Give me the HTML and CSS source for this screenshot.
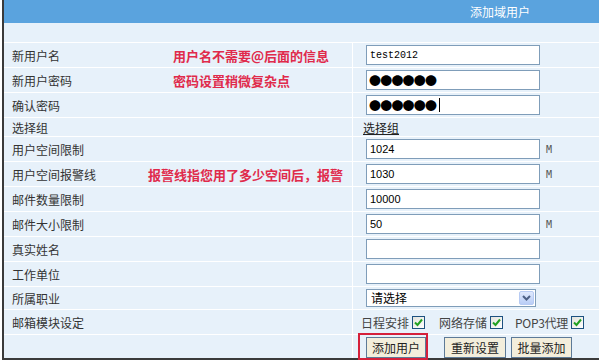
FILE: index.html
```html
<!DOCTYPE html>
<html>
<head>
    <meta charset="utf-8">
    <title>添加域用户</title>
    <link rel="stylesheet" href="styles.css">
</head>
<body>
    <div class="panel">
        <div class="title">添加域用户</div>

        <div class="form">
            <div class="cell blank"></div>

            <div class="cell label"><span class="name">新用户名</span><span class="note">用户名不需要@后面的信息</span></div>
            <div class="cell field"><input type="text" class="text mono" value="test2012"></div>

            <div class="cell label"><span class="name">新用户密码</span><span class="note">密码设置稍微复杂点</span></div>
            <div class="cell field"><input type="text" class="text pw" value="●●●●●●"></div>

            <div class="cell label"><span class="name">确认密码</span></div>
            <div class="cell field">
                <span class="pw-wrap"><input type="text" class="text pw" value="●●●●●●"><span class="caret"></span></span>
            </div>

            <div class="cell label"><span class="name">选择组</span></div>
            <div class="cell field link-cell"><a href="#" class="link">选择组</a></div>

            <div class="cell label"><span class="name">用户空间限制</span></div>
            <div class="cell field"><input type="text" class="text" value="1024"><span class="unit">M</span></div>

            <div class="cell label"><span class="name short-name">用户空间报警线</span><span class="note">报警线指您用了多少空间后，报警</span></div>
            <div class="cell field"><input type="text" class="text" value="1030"><span class="unit">M</span></div>

            <div class="cell label"><span class="name">邮件数量限制</span></div>
            <div class="cell field"><input type="text" class="text" value="10000"></div>

            <div class="cell label"><span class="name">邮件大小限制</span></div>
            <div class="cell field"><input type="text" class="text" value="50"><span class="unit">M</span></div>

            <div class="cell label"><span class="name">真实姓名</span></div>
            <div class="cell field"><input type="text" class="text"></div>

            <div class="cell label"><span class="name">工作单位</span></div>
            <div class="cell field"><input type="text" class="text"></div>

            <div class="cell label"><span class="name">所属职业</span></div>
            <div class="cell field">
                <div class="select-wrap">
                    <select class="select">
                        <option>请选择</option>
                    </select>
                    <span class="arrow">
                        <svg width="9" height="6" viewBox="0 0 9 6"><path d="M1 1 L4.5 4.5 L8 1" fill="none" stroke="#4d6185" stroke-width="2"/></svg>
                    </span>
                </div>
            </div>

            <div class="cell label"><span class="name">邮箱模块设定</span></div>
            <div class="cell field modules">
                <span class="module">日程安排</span>
                <span class="check"><svg width="13" height="13" viewBox="0 0 13 13"><path d="M3 6.5 L5.5 9 L10 3.5" fill="none" stroke="#21a121" stroke-width="2"/></svg></span>
                <span class="module gap">网络存储</span>
                <span class="check"><svg width="13" height="13" viewBox="0 0 13 13"><path d="M3 6.5 L5.5 9 L10 3.5" fill="none" stroke="#21a121" stroke-width="2"/></svg></span>
                <span class="module gap pop">POP3代理</span>
                <span class="check"><svg width="13" height="13" viewBox="0 0 13 13"><path d="M3 6.5 L5.5 9 L10 3.5" fill="none" stroke="#21a121" stroke-width="2"/></svg></span>
            </div>

            <div class="cell label"></div>
            <div class="cell field buttons">
                <button class="btn">添加用户</button>
                <button class="btn btn-reset">重新设置</button>
                <button class="btn btn-batch">批量添加</button>
            </div>
        </div>

        <div class="mark"></div>
    </div>
</body>
</html>
```

FILE: styles.css
```css
:root {
    --head-color: #5aa3de;
    --row-color: #e7f1fa;
    --line-color: #7f9db9;
    --note-color: #e02a4b;
}

body {
    margin: 0;
    background: #fff;
    font-family: "Noto Sans CJK SC", sans-serif;
    font-size: 12px;
    color: #333;
    overflow: hidden;
}

.panel {
    position: relative;
    width: 620px;
    margin-left: 2px;
    border-left: 2px solid #3a3a3a;
    border-bottom: 2px solid #3a3a3a;
}

.title {
    height: 23px;
    line-height: 23px;
    padding-left: 466px;
    background: var(--head-color);
    color: #fff;
}

.form {
    display: grid;
    grid-template-columns: 348px 1fr;
    grid-template-rows: 19px 24px 24px 24px 18px repeat(6, 24px) 22px 24px 23px;
    gap: 1px;
    background: #fff;
}

.cell {
    display: flex;
    align-items: center;
    background: var(--row-color);
}

.blank {
    grid-column: 1 / 3;
}

.label {
    padding-left: 8px;
}

.name {
    width: 161px;
    flex-shrink: 0;
}

.name.short-name {
    width: 136px;
}

.note {
    color: var(--note-color);
    font-size: 13px;
    font-weight: bold;
}

.field {
    padding-left: 13px;
}

.text {
    box-sizing: border-box;
    width: 174px;
    height: 20px;
    margin: 0;
    padding: 0 3px;
    border: 1px solid var(--line-color);
    background: #fff;
    font-family: "Liberation Sans", sans-serif;
    font-size: 11px;
    color: #000;
    outline: none;
}

.text.mono {
    font-family: "Liberation Mono", monospace;
    font-size: 10px;
}

.text.pw {
    font-family: "Noto Sans CJK SC", sans-serif;
    font-size: 12px;
    letter-spacing: -0.8px;
    padding-left: 2px;
}

.pw-wrap {
    position: relative;
    display: inline-block;
    height: 20px;
}

.caret {
    position: absolute;
    left: 73px;
    top: 3px;
    width: 1px;
    height: 14px;
    background: #000;
}

.unit {
    margin-left: 6px;
    font-family: "DejaVu Sans Mono", monospace;
    font-size: 10px;
    color: #555;
}

.link-cell {
    padding-left: 10px;
}

.link {
    color: #222;
    text-decoration: underline;
}

.select-wrap {
    position: relative;
    display: inline-block;
}

.select {
    appearance: none;
    -webkit-appearance: none;
    box-sizing: border-box;
    width: 170px;
    height: 18px;
    margin: 0;
    padding: 0 4px;
    border: 1px solid var(--line-color);
    border-radius: 0;
    background: #fff;
    font-family: "Noto Sans CJK SC", sans-serif;
    font-size: 12px;
    line-height: 16px;
    color: #000;
}

.arrow {
    position: absolute;
    top: 2px;
    right: 2px;
    width: 15px;
    height: 14px;
    display: flex;
    align-items: center;
    justify-content: center;
    box-sizing: border-box;
    border: 1px solid #b7cbf3;
    border-radius: 2px;
    background: linear-gradient(#dfe9fd, #b9cdf6);
}

.modules {
    padding-left: 8px;
}

.module {
    color: #444;
}

.module.gap {
    margin-left: 14px;
}

.module.pop {
    margin-left: 12px;
    letter-spacing: -0.3px;
}

.check {
    display: inline-flex;
    box-sizing: border-box;
    width: 13px;
    height: 13px;
    margin-left: 3px;
    border: 1px solid #1c5180;
    background: linear-gradient(135deg, #e3e3dc, #fff);
}

.check svg {
    margin: -1px;
}

.buttons {
    align-items: flex-start;
    padding-top: 2px;
}

.btn {
    box-sizing: border-box;
    height: 21px;
    width: 60px;
    padding: 0;
    border: 1px solid #5d7a97;
    background: #f3eedc;
    font-family: "Noto Sans CJK SC", sans-serif;
    font-size: 12px;
    color: #222;
}

.btn-reset {
    width: 62px;
    margin-left: 18px;
}

.btn-batch {
    width: 61px;
    margin-left: 5px;
}

.mark {
    position: absolute;
    left: 354px;
    top: 333px;
    width: 70px;
    height: 27px;
    box-sizing: border-box;
    border: 2px solid #d5203a;
}
```
